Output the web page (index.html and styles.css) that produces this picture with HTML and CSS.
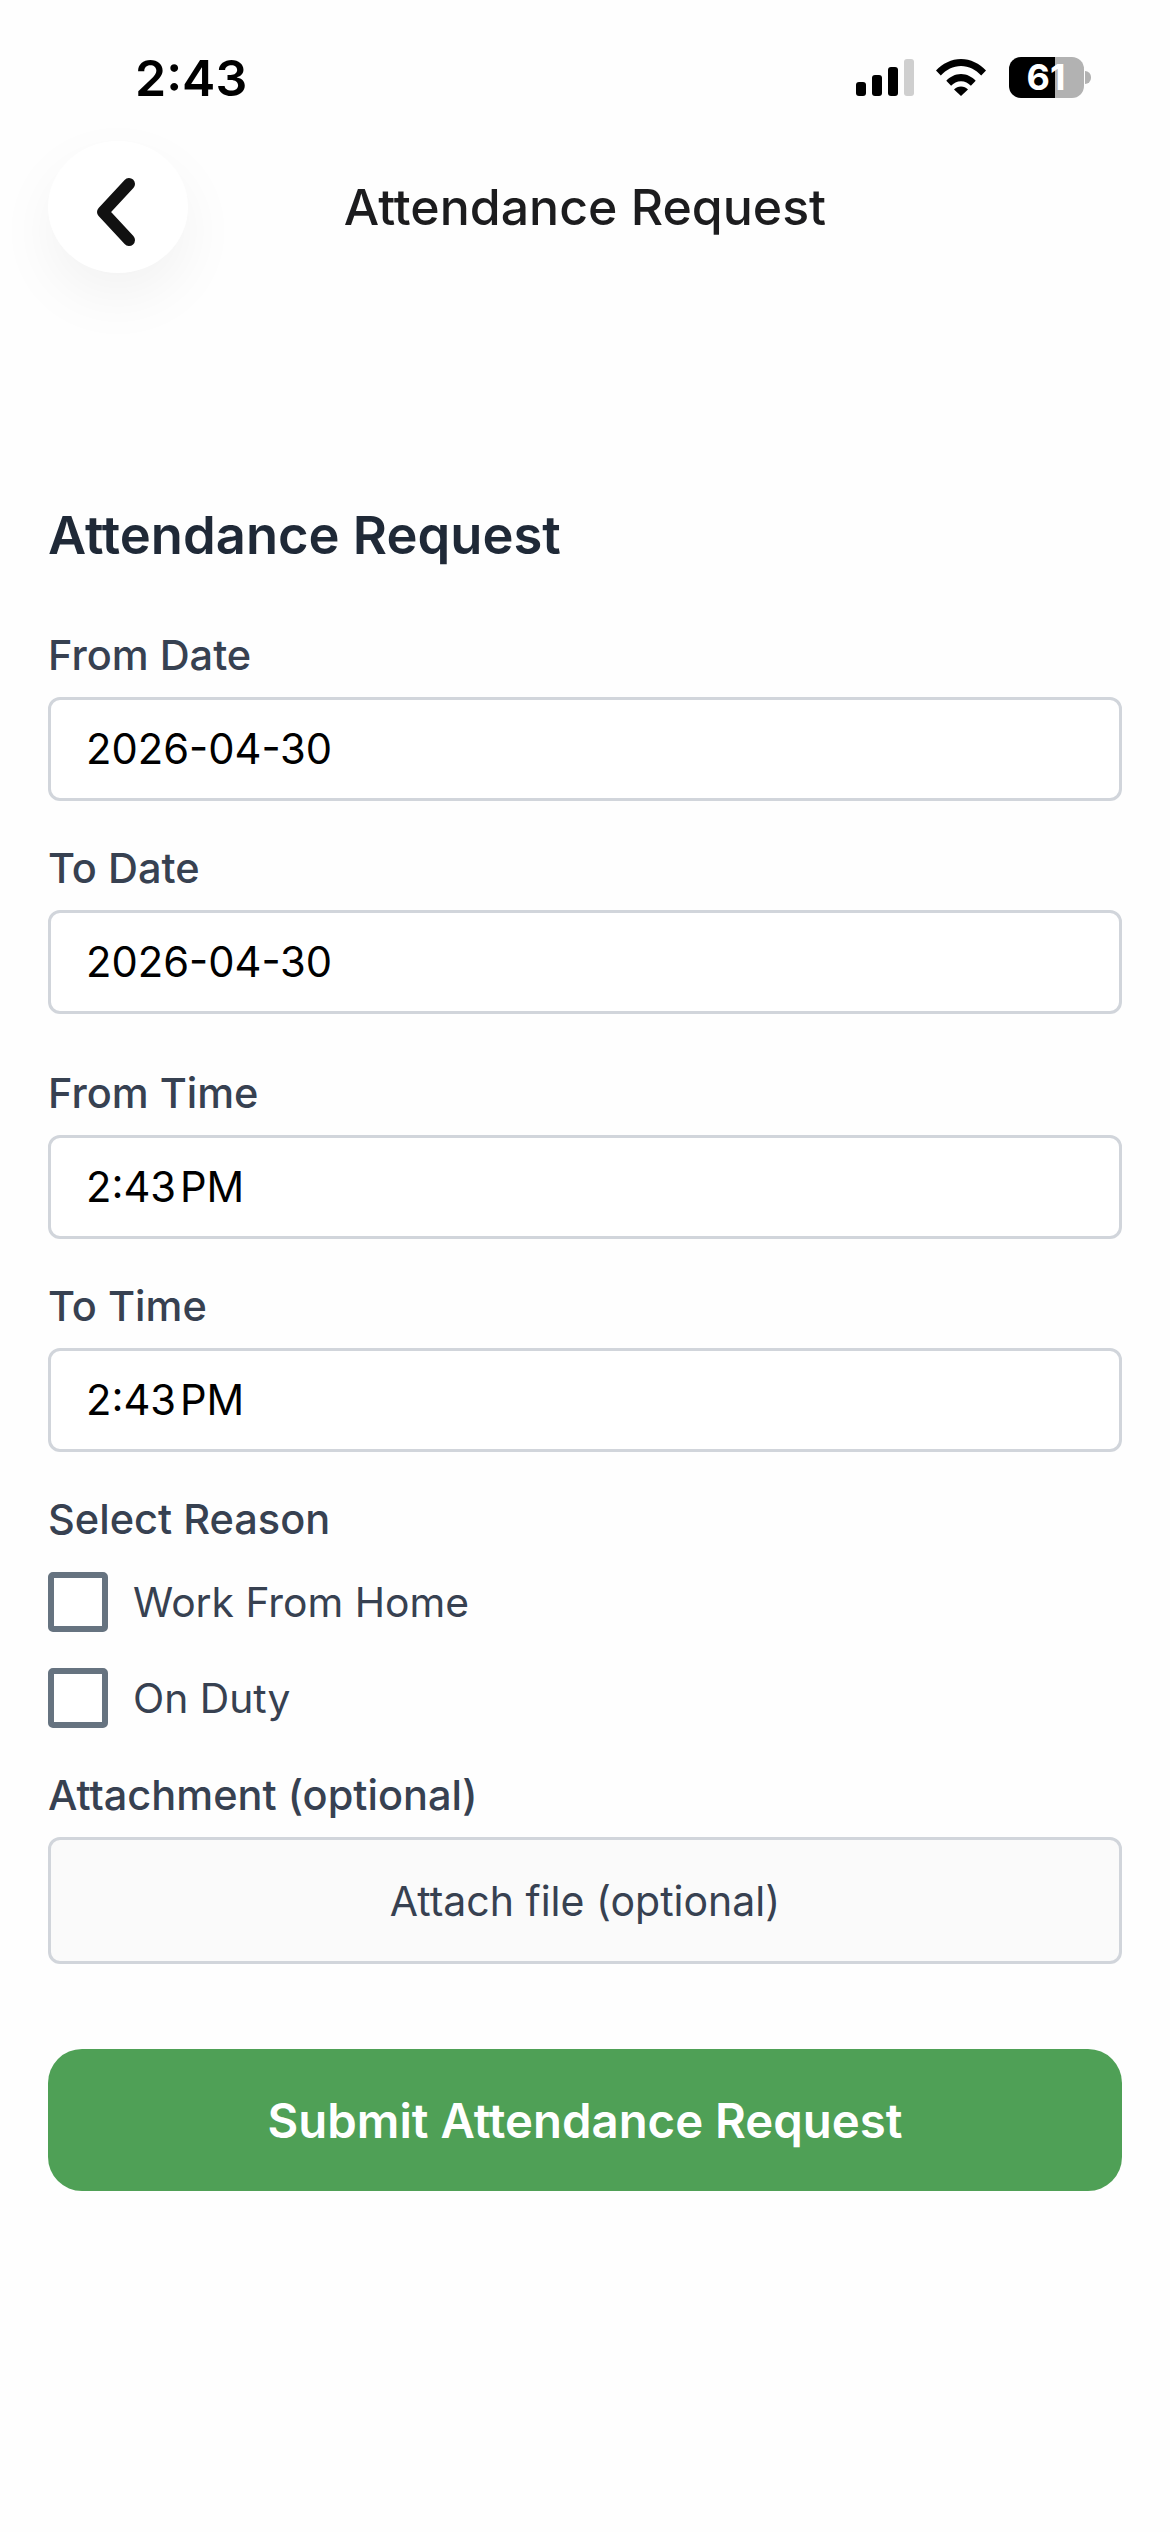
FILE: index.html
```html
<!DOCTYPE html>
<html lang="en">
<head>
    <meta charset="UTF-8">
    <meta name="viewport" content="width=device-width, initial-scale=1.0">
    <title>Attendance Request</title>
    <link rel="stylesheet" href="styles.css">
</head>

<body>
    <div class="status-bar">
        <span class="status-time">2:43</span>
        <div class="status-icons">
            <div class="signal">
                <span class="bar bar-1"></span>
                <span class="bar bar-2"></span>
                <span class="bar bar-3"></span>
                <span class="bar bar-4"></span>
            </div>
            <svg class="wifi" width="50" height="37" viewBox="0 0 50 37">
                <path d="M0 11.500C6.500 4.500 15.500 0 25 0s18.500 4.500 25 11.500l-4.800 5C39.800 10.800 32.800 7 25 7S10.200 10.800 4.800 16.500z"/>
                <path d="M10.300 21.800C13.900 17.800 19.200 15 25 15s11.100 2.800 14.700 6.800l-4.800 5C32.400 24 28.900 22.200 25 22.200s-7.400 1.800-9.900 4.600z"/>
                <path d="M18 30.500c1.800-1.900 4.300-3 7-3s5.200 1.100 7 3l-7 6.500z"/>
            </svg>
            <div class="battery">
                <div class="battery-body"><span class="battery-level">61</span></div>
                <span class="battery-nub"></span>
            </div>
        </div>
    </div>

    <header class="app-header">
        <button class="back-btn" aria-label="Back">
            <svg width="42" height="70" viewBox="0 0 42 70">
                <path d="M34 7 L8 35 L34 63" fill="none" stroke="#111" stroke-width="12" stroke-linecap="round" stroke-linejoin="round"/>
            </svg>
        </button>
        <h1 class="header-title">Attendance Request</h1>
    </header>

    <form class="request-form">
        <h2 class="form-title">Attendance Request</h2>

        <div class="field">
            <label>From Date</label>
            <input type="text" value="2026-04-30">
        </div>
        <div class="field">
            <label>To Date</label>
            <input type="text" value="2026-04-30">
        </div>
        <div class="field field-time">
            <label>From Time</label>
            <input type="text" value="2:43&#8202;PM">
        </div>
        <div class="field">
            <label>To Time</label>
            <input type="text" value="2:43&#8202;PM">
        </div>

        <div class="field">
            <label class="reason-label">Select Reason</label>
            <div class="check-row"><span class="check-box"></span>Work From Home</div>
            <div class="check-row"><span class="check-box"></span>On Duty</div>
        </div>

        <div class="field field-attach">
            <label>Attachment (optional)</label>
            <button type="button" class="attach-btn">Attach file (optional)</button>
        </div>

        <button type="button" class="submit-btn">Submit Attendance Request</button>
    </form>
</body>
</html>
```

FILE: styles.css
```css
* {
    box-sizing: border-box;
}

body {
    margin: 0;
    height: 2532px;
    overflow: hidden;
    background-color: #fefefe;
    font-family: Inter, "Noto Sans", sans-serif;
    color: #374151;
}

/* Status bar */
.status-bar {
    display: flex;
    justify-content: space-between;
    align-items: center;
    height: 57px;
    margin-top: 49px;
    padding: 0 79px 0 135px;
}

.status-time {
    font-size: 50px;
    font-weight: 600;
    color: #000;
}

.status-icons {
    display: flex;
    align-items: center;
}

.signal {
    display: flex;
    align-items: flex-end;
    gap: 6px;
    height: 37px;
    margin-right: 22px;
}

.bar {
    width: 10px;
    background-color: #000;
    border-radius: 3px;
}

.bar-1 { height: 14px; }
.bar-2 { height: 21px; }
.bar-3 { height: 29px; }
.bar-4 { height: 37px; background-color: #cfcfcf; }

.wifi {
    margin-right: 23px;
}

.battery {
    display: flex;
    align-items: center;
}

.battery-body {
    display: flex;
    align-items: center;
    width: 75px;
    height: 41px;
    border-radius: 12px;
    background: linear-gradient(to right, #000 46px, #b2b2b2 46px);
}

.battery-level {
    width: 75px;
    padding-right: 1px;
    text-align: center;
    font-size: 36px;
    line-height: 41px;
    font-weight: 700;
    color: #fff;
}

.battery-nub {
    width: 6px;
    height: 13px;
    margin-left: 1px;
    border-radius: 0 7px 7px 0;
    background-color: #b2b2b2;
}

/* Header */
.app-header {
    display: grid;
    grid-template-columns: 140px 1fr 140px;
    align-items: center;
    margin-top: 35px;
    padding: 0 48px;
}

.back-btn {
    display: flex;
    justify-content: center;
    align-items: center;
    width: 140px;
    height: 132px;
    padding: 10px 4px 0 0;
    border: none;
    border-radius: 50%;
    background-color: #fff;
    box-shadow: 0 24px 60px rgba(0, 0, 0, 0.05);
}

.header-title {
    margin: 0;
    text-align: center;
    font-size: 50px;
    font-weight: 500;
    color: #1c1c1e;
}

/* Form */
.request-form {
    display: flex;
    flex-direction: column;
    padding: 0 48px;
}

.form-title {
    margin: 231px 0 64px;
    font-size: 52.500px;
    line-height: 62px;
    font-weight: 600;
    color: #1f2937;
}

.field {
    display: flex;
    flex-direction: column;
    margin-bottom: 42px;
}

.field-time {
    margin-top: 12px;
}

.field label {
    height: 50px;
    margin-bottom: 17px;
    font-size: 41.500px;
    line-height: 50px;
    font-weight: 500;
}

.field .reason-label {
    margin-bottom: 28px;
}

.field input {
    height: 104px;
    padding: 0 35px;
    border: 3px solid #d1d5db;
    border-radius: 12px;
    background-color: #fff;
    font-family: inherit;
    font-size: 41.700px;
    color: #000;
}

.check-row {
    display: flex;
    align-items: center;
    gap: 25px;
    height: 60px;
    margin-bottom: 36px;
    font-size: 40.800px;
}

.check-row:last-child {
    margin-bottom: 0;
}

.check-box {
    width: 60px;
    height: 60px;
    border: 6px solid #667380;
    border-radius: 5px;
    background-color: #fff;
}

.attach-btn {
    height: 127px;
    border: 3px solid #d1d5db;
    border-radius: 12px;
    background-color: #fafafa;
    font-family: inherit;
    font-size: 41px;
    color: #374151;
}

.submit-btn {
    height: 142px;
    margin-top: 43px;
    border: none;
    border-radius: 34px;
    background-color: #4fa056;
    font-family: inherit;
    font-size: 47.300px;
    font-weight: 600;
    color: #fff;
}
```
